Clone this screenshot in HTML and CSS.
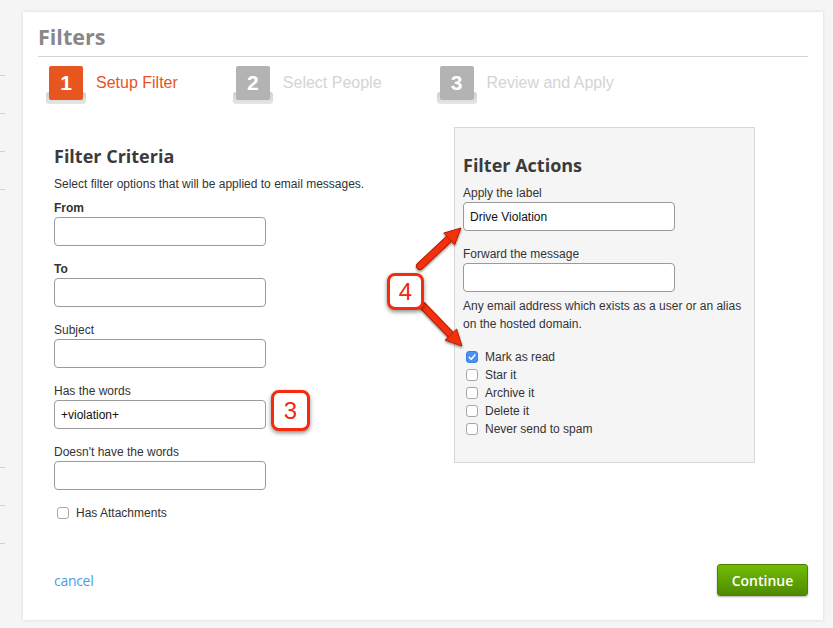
FILE: index.html
```html
<!DOCTYPE html>
<html lang="en">
<head>
<meta charset="utf-8">
<title>Filters</title>
<link rel="stylesheet" href="styles.css">
</head>
<body>
<div class="gutter">
  <span class="tick"></span>
  <span class="tick"></span>
  <span class="tick"></span>
  <span class="tick"></span>
  <span class="tick tick-lower"></span>
  <span class="tick"></span>
  <span class="tick"></span>
</div>
<div class="card">
  <h1 class="title">Filters</h1>
  <ol class="steps">
    <li class="step active"><span class="num">1</span><span class="step-label">Setup Filter</span></li>
    <li class="step"><span class="num">2</span><span class="step-label">Select People</span></li>
    <li class="step"><span class="num">3</span><span class="step-label">Review and Apply</span></li>
  </ol>
  <div class="main">
    <section class="criteria">
      <h2 class="section-title">Filter Criteria</h2>
      <p class="desc">Select filter options that will be applied to email messages.</p>
      <label class="field-label strong">From</label>
      <input class="text-input" type="text">
      <label class="field-label strong">To</label>
      <input class="text-input" type="text">
      <label class="field-label">Subject</label>
      <input class="text-input" type="text">
      <label class="field-label">Has the words</label>
      <input class="text-input" type="text" value="+violation+">
      <label class="field-label">Doesn't have the words</label>
      <input class="text-input" type="text">
      <label class="check"><span class="cb"></span>Has Attachments</label>
    </section>
    <section class="actions">
      <h2 class="section-title">Filter Actions</h2>
      <label class="field-label">Apply the label</label>
      <input class="text-input" type="text" value="Drive Violation">
      <label class="field-label">Forward the message</label>
      <input class="text-input tight" type="text">
      <p class="help">Any email address which exists as a user or an alias on the hosted domain.</p>
      <label class="check"><span class="cb checked"><svg viewBox="0 0 12 12" width="12" height="12"><path d="M3.2 6.3 L5.2 8.2 L8.9 3.9" fill="none" stroke="#fff" stroke-width="1.5" stroke-linecap="round" stroke-linejoin="round"/></svg></span>Mark as read</label>
      <label class="check"><span class="cb"></span>Star it</label>
      <label class="check"><span class="cb"></span>Archive it</label>
      <label class="check"><span class="cb"></span>Delete it</label>
      <label class="check"><span class="cb"></span>Never send to spam</label>
    </section>
  </div>
  <div class="footer">
    <a class="cancel" href="#">cancel</a>
    <button class="continue" type="button">Continue</button>
  </div>
  <svg class="arrows" viewBox="0 0 833 628" width="833" height="628">
    <defs>
      <filter id="sh" x="-20%" y="-20%" width="140%" height="140%">
        <feDropShadow dx="0" dy="1.5" stdDeviation="1.2" flood-color="#000" flood-opacity="0.45"/>
      </filter>
    </defs>
    <g filter="url(#sh)">
      <line x1="420" y1="266" x2="451" y2="237" stroke="#b91b04" stroke-width="8" stroke-linecap="round"/>
      <line x1="420" y1="266" x2="451" y2="237" stroke="#f2300f" stroke-width="6" stroke-linecap="round"/>
      <polygon points="461,228 454.7,244.7 443.8,233" fill="#f2300f" stroke="#b91b04" stroke-width="1" stroke-linejoin="round"/>
      <line x1="423" y1="306" x2="452" y2="336" stroke="#b91b04" stroke-width="8" stroke-linecap="round"/>
      <line x1="423" y1="306" x2="452" y2="336" stroke="#f2300f" stroke-width="6" stroke-linecap="round"/>
      <polygon points="462,346 445.1,340.1 456.6,329" fill="#f2300f" stroke="#b91b04" stroke-width="1" stroke-linejoin="round"/>
    </g>
  </svg>
  <div class="callout callout-3">3</div>
  <div class="callout callout-4">4</div>
</div>
</body>
</html>
```
FILE: styles.css
```css
html, body {
  margin: 0;
  padding: 0;
}
body {
  width: 833px;
  height: 628px;
  overflow: hidden;
  background: #f5f5f5;
  display: flex;
  align-items: flex-start;
  font-family: "Liberation Sans", Arial, sans-serif;
  font-size: 12px;
  color: #333;
}

/* left decorative ticks */
.gutter {
  width: 23px;
  flex: none;
  display: flex;
  flex-direction: column;
  align-items: flex-start;
  padding-top: 75px;
}
.tick {
  display: block;
  width: 5px;
  height: 1px;
  background: #d2d2d2;
  margin-bottom: 37px;
}
.tick-lower {
  margin-top: 240px;
}

/* card */
.card {
  position: relative;
  margin-top: 12px;
  width: 800px;
  height: 608px;
  box-sizing: border-box;
  padding: 13px 15px 24px;
  background: #fff;
  box-shadow: 0 0 3px rgba(0, 0, 0, 0.13);
  display: flex;
  flex-direction: column;
}
.title {
  margin: 0;
  font-family: "Open Sans", "Liberation Sans", sans-serif;
  font-weight: 700;
  font-size: 21.5px;
  line-height: 24px;
  color: #878787;
  padding-bottom: 7px;
  border-bottom: 1px solid #d4d4d4;
}

/* steps */
.steps {
  list-style: none;
  margin: 9px 0 0;
  padding: 0 0 0 11px;
  display: flex;
  gap: 58px;
}
.step {
  position: relative;
  z-index: 0;
  display: flex;
  align-items: center;
  gap: 13px;
}
.num {
  position: relative;
  width: 34px;
  height: 34px;
  border-radius: 2px;
  background: #b3b3b3;
  color: #fff;
  font-weight: 700;
  font-size: 21px;
  line-height: 34px;
  text-align: center;
}
.num::before {
  content: "";
  position: absolute;
  left: -3px;
  right: -3px;
  bottom: -4px;
  height: 12px;
  border-radius: 3px;
  background: linear-gradient(#cfcfcf, #e6e6e6);
  z-index: -1;
}
.step-label {
  font-size: 16px;
  color: #d4d4d4;
}
.step.active .num {
  background: #e8561f;
}
.step.active .step-label {
  color: #e8531e;
}

/* main */
.main {
  margin-top: 27px;
  padding-left: 16px;
  display: flex;
  align-items: flex-start;
}
.criteria {
  width: 400px;
  padding-top: 18px;
  display: flex;
  flex-direction: column;
  align-items: flex-start;
}
.section-title {
  margin: 0 0 8px;
  font-family: "Open Sans", "Liberation Sans", sans-serif;
  font-weight: 700;
  font-size: 18px;
  line-height: 22px;
  color: #3b3b3b;
}
.desc {
  margin: 0 0 6px;
  line-height: 18px;
}
.field-label {
  display: block;
  line-height: 18px;
}
.field-label.strong {
  font-weight: 700;
}
.text-input {
  display: block;
  box-sizing: border-box;
  width: 212px;
  height: 29px;
  margin: 0 0 14px;
  padding: 0 6px;
  border: 1px solid #9a9a9a;
  border-radius: 4px;
  background: #fff;
  font-family: "Liberation Sans", Arial, sans-serif;
  font-size: 12px;
  color: #111;
  outline: none;
}
.text-input.tight {
  margin-bottom: 5px;
}
.check {
  display: flex;
  align-items: center;
  gap: 7px;
  padding-left: 3px;
  line-height: 18px;
}
.cb {
  width: 12px;
  height: 12px;
  box-sizing: border-box;
  border: 1px solid #a6a6a6;
  border-radius: 3px;
  background: #fff;
  display: flex;
}
.cb svg {
  display: block;
  margin: -1px;
}
.cb.checked {
  background: #4a90f5;
  border-color: #3d7fe0;
}

/* actions panel */
.actions {
  width: 301px;
  box-sizing: border-box;
  padding: 26px 8px 24px;
  background: #f5f5f5;
  border: 1px solid #d6d6d6;
  display: flex;
  flex-direction: column;
  align-items: flex-start;
}
.help {
  margin: 0 0 15px;
  line-height: 18px;
  width: 290px;
}

/* footer */
.footer {
  margin-top: auto;
  padding-left: 16px;
  display: flex;
  align-items: center;
  justify-content: space-between;
}
.cancel {
  font-family: "Open Sans", "Liberation Sans", sans-serif;
  font-size: 14px;
  letter-spacing: -0.3px;
  color: #4b9ee3;
  text-decoration: none;
}
.continue {
  width: 91px;
  height: 32px;
  box-sizing: border-box;
  border: 1px solid #4c8100;
  border-radius: 3px;
  background: linear-gradient(#72bc05, #4f8b00);
  box-shadow: 0 1px 2px rgba(0, 0, 0, 0.3);
  color: #fff;
  font-family: "Open Sans", "Liberation Sans", sans-serif;
  font-weight: 600;
  font-size: 14px;
  padding: 0;
}

/* annotations */
.arrows {
  position: absolute;
  left: -23px;
  top: -12px;
  pointer-events: none;
}
.callout {
  position: absolute;
  box-sizing: border-box;
  border: 3px solid #f42b0f;
  border-radius: 8px;
  background: #fff;
  box-shadow: 0 2px 4px rgba(0, 0, 0, 0.45);
  color: #f02a10;
  font-size: 24px;
  display: flex;
  align-items: center;
  justify-content: center;
}
.callout-3 {
  left: 248px;
  top: 378px;
  width: 39px;
  height: 41px;
}
.callout-4 {
  left: 364px;
  top: 261px;
  width: 37px;
  height: 37px;
}
```
